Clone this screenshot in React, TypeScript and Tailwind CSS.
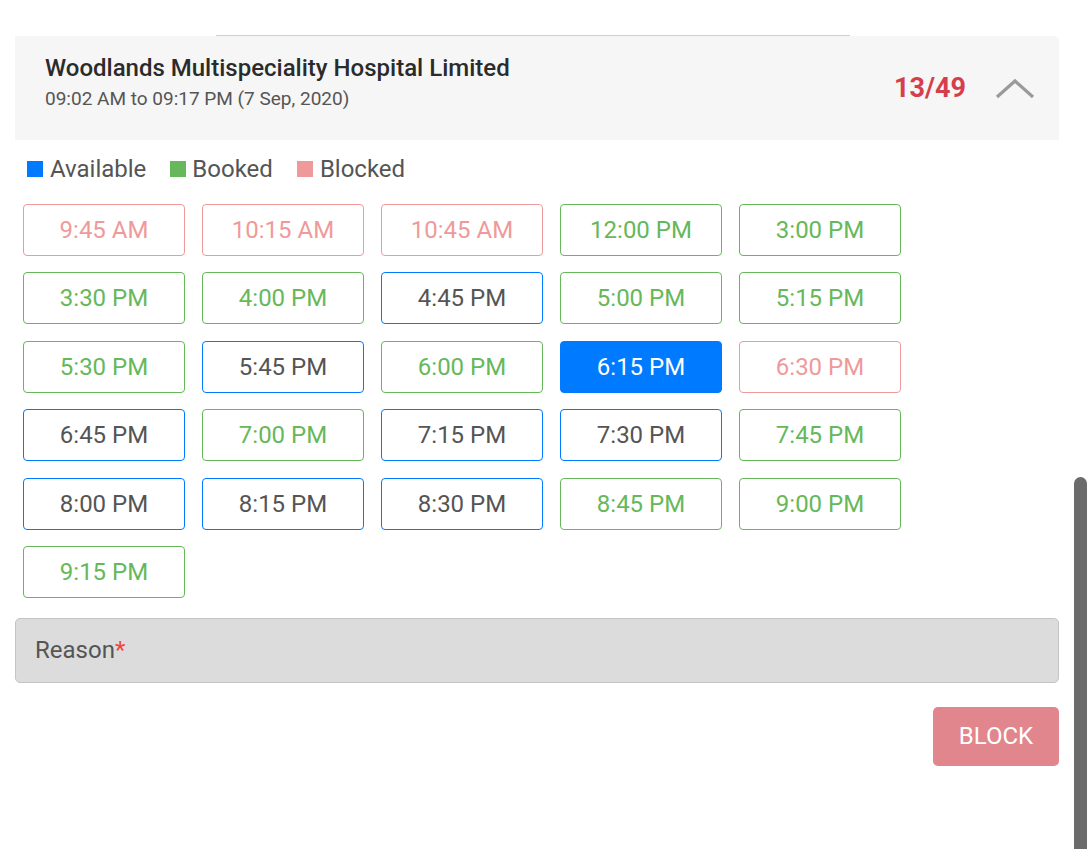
type SlotState = "available" | "booked" | "blocked" | "selected";

const slots: [string, SlotState][] = [
  ["9:45 AM", "blocked"],
  ["10:15 AM", "blocked"],
  ["10:45 AM", "blocked"],
  ["12:00 PM", "booked"],
  ["3:00 PM", "booked"],
  ["3:30 PM", "booked"],
  ["4:00 PM", "booked"],
  ["4:45 PM", "available"],
  ["5:00 PM", "booked"],
  ["5:15 PM", "booked"],
  ["5:30 PM", "booked"],
  ["5:45 PM", "available"],
  ["6:00 PM", "booked"],
  ["6:15 PM", "selected"],
  ["6:30 PM", "blocked"],
  ["6:45 PM", "available"],
  ["7:00 PM", "booked"],
  ["7:15 PM", "available"],
  ["7:30 PM", "available"],
  ["7:45 PM", "booked"],
  ["8:00 PM", "available"],
  ["8:15 PM", "available"],
  ["8:30 PM", "available"],
  ["8:45 PM", "booked"],
  ["9:00 PM", "booked"],
  ["9:15 PM", "booked"],
];

const slotStyles: Record<SlotState, string> = {
  available: "border-[#007bff] text-[#555] bg-white",
  booked: "border-[#66b85a] text-[#66b85a] bg-white",
  blocked: "border-[#ef9a9a] text-[#ef9a9a] bg-white",
  selected: "border-[#007bff] text-white bg-[#007bff]",
};

export default function App() {
  return (
    <div
      className="relative w-[1088px] h-[849px] bg-white overflow-hidden"
      style={{ fontFamily: "Roboto, 'Liberation Sans', sans-serif" }}
    >
      <div className="pt-[35px] pl-[15px] w-[1059px]">
        <div className="ml-[201px] w-[634px] h-px bg-[#cfcfcf]" />

        {/* header */}
        <div className="h-[104px] bg-[#f6f6f6] rounded-tr-[5px] flex items-start justify-between pl-[30px] pr-[24px]">
          <div className="pt-[18px]">
            <h2 className="text-[24px] leading-[28px] font-medium text-[#2b2b2b]">
              Woodlands Multispeciality Hospital Limited
            </h2>
            <p className="text-[19px] leading-[22px] mt-[6px] text-[#555]">
              09:02 AM to 09:17 PM (7 Sep, 2020)
            </p>
          </div>
          <div className="flex items-center gap-[29px] h-full pt-[1px]">
            <span className="text-[27px] font-bold text-[#d63e4c]">13/49</span>
            <svg width="40" height="22" viewBox="0 0 40 22" fill="none">
              <path d="M2 19 L20 3 L38 19" stroke="#9a9a9a" strokeWidth="3.2" />
            </svg>
          </div>
        </div>

        {/* legend */}
        <div className="flex items-center pl-[12px] mt-[17px] h-[24px] text-[24px] text-[#555]">
          <span className="w-4 h-4 bg-[#007bff]" />
          <span className="ml-[7px]">Available</span>
          <span className="w-4 h-4 bg-[#66b85a] ml-[24px]" />
          <span className="ml-[6px]">Booked</span>
          <span className="w-4 h-4 bg-[#ef9a9a] ml-[24px]" />
          <span className="ml-[7px]">Blocked</span>
        </div>

        {/* slots */}
        <div className="grid grid-cols-[repeat(5,162px)] gap-x-[17px] gap-y-[16.4px] pl-[8px] mt-[23px]">
          {slots.map(([time, state]) => (
            <button
              key={time}
              className={`h-[52px] border rounded-[4px] text-[24px] flex items-center justify-center ${slotStyles[state]}`}
            >
              {time}
            </button>
          ))}
        </div>

        {/* reason */}
        <div className="mt-[20px] h-[65px] bg-[#dcdcdc] border border-[#c4c4c4] rounded-[5px] flex items-center pl-[19px] text-[24px] text-[#555]">
          Reason<span className="text-[#f44336]">*</span>
        </div>

        <div className="flex justify-end mt-[24px]">
          <button className="w-[126px] h-[59px] bg-[#e2868e] rounded-[5px] text-white text-[24px]">
            BLOCK
          </button>
        </div>
      </div>

      <div className="absolute left-[1074px] top-[477px] w-[13px] h-[380px] rounded-full bg-[#6b6b6b]" />
    </div>
  );
}
